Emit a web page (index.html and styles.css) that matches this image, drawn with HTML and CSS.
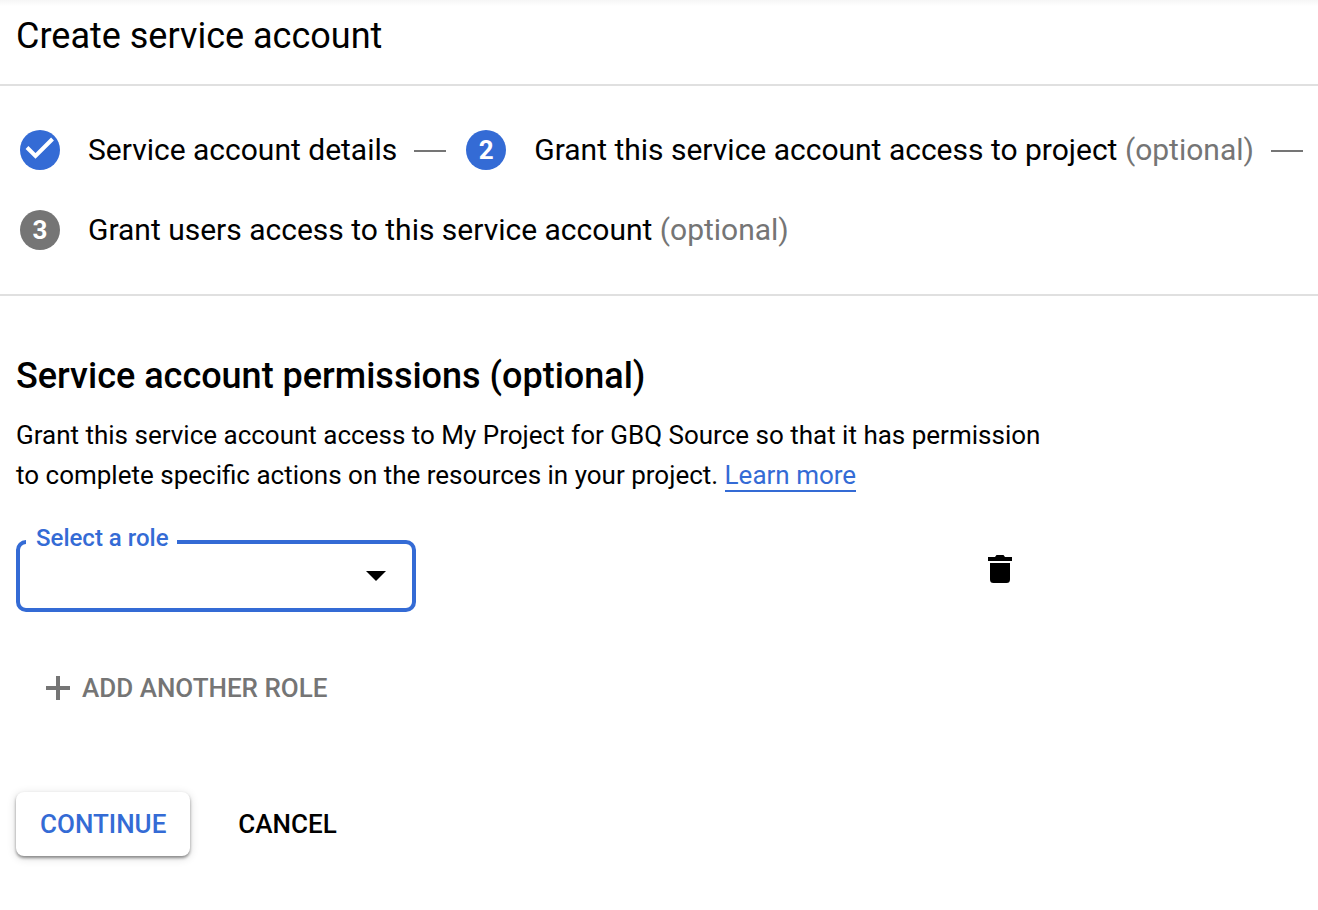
FILE: index.html
```html
<!DOCTYPE html>
<html lang="en">
<head>
<meta charset="utf-8">
<meta name="viewport" content="width=device-width, initial-scale=1">
<title>Create service account</title>
<link rel="stylesheet" href="styles.css">
</head>
<body>
<header class="page-header">
  <h1 class="page-title">Create service account</h1>
</header>
<main>
  <ol class="steps">
    <li class="step">
      <span class="badge">
        <svg class="badge-check" viewBox="0 0 40 40" aria-label="Completed"><path d="M7 17.500 15.500 26 32.500 9" fill="none" stroke="#fff" stroke-width="4"/></svg>
      </span>
      <span class="step-label">Service account details</span>
      <span class="step-line"></span>
    </li>
    <li class="step">
      <span class="badge">2</span>
      <span class="step-label">Grant this service account access to project <span class="optional">(optional)</span></span>
      <span class="step-line"></span>
    </li>
    <li class="step">
      <span class="badge badge-pending">3</span>
      <span class="step-label">Grant users access to this service account <span class="optional">(optional)</span></span>
    </li>
  </ol>
  <form class="permissions">
    <h2 class="section-title">Service account permissions (optional)</h2>
    <p class="description">Grant this service account access to My Project for GBQ Source so that it has permission to complete specific actions on the resources in your project. <a class="link" href="#">Learn more</a></p>
    <div class="role-row">
      <fieldset class="field">
        <legend class="field-legend"><label for="role">Select a role</label></legend>
        <div class="field-control">
          <select class="field-select" id="role"><option value=""></option></select>
          <svg class="field-arrow" viewBox="0 0 20 10" aria-hidden="true"><path d="M0 0h20L10 10z"/></svg>
        </div>
      </fieldset>
      <button class="delete-button" type="button" aria-label="Delete role">
        <svg class="delete-icon" viewBox="0 0 24 28" aria-hidden="true"><path d="M0 2h7l1.5-2h7L17 2h7v4H0zM2 8h20v16.500q0 3.500-3.500 3.500h-13Q2 28 2 24.500z"/></svg>
      </button>
    </div>
    <button class="button add-button" type="button">
      <svg class="add-icon" viewBox="0 0 24 24" aria-hidden="true"><path d="M10 0h4v10h10v4H14v10h-4V14H0v-4h10z"/></svg>
      ADD ANOTHER ROLE
    </button>
    <div class="actions">
      <button class="button continue-button" type="submit">CONTINUE</button>
      <button class="button cancel-button" type="button">CANCEL</button>
    </div>
  </form>
</main>
</body>
</html>
```
FILE: styles.css
```css
* {
  box-sizing: border-box;
}

body {
  margin: 0;
  background: #fff;
  color: #000;
  font-family: Roboto, "Liberation Sans", sans-serif;
  font-size: 26px;
}

svg {
  display: block;
}

.page-header {
  padding: 16px 16px 28px;
  border-bottom: 2px solid #e0e0e0;
  background: linear-gradient(#f6f6f6, #fff 6px);
}

.page-title,
.section-title {
  margin: 0;
  font-size: 36px;
  font-weight: 400;
  line-height: 40px;
}

.section-title {
  font-weight: 500;
}

.steps {
  display: flex;
  flex-wrap: wrap;
  gap: 40px 20px;
  margin: 0;
  padding: 44px 0 44px 20px;
  border-bottom: 2px solid #e0e0e0;
  list-style: none;
}

.step {
  display: flex;
  align-items: center;
}

.badge {
  display: flex;
  flex: none;
  align-items: center;
  justify-content: center;
  width: 40px;
  height: 40px;
  margin-right: 28px;
  border-radius: 50%;
  background: #346bd5;
  color: #fff;
  font-weight: 700;
  line-height: 40px;
}

.badge-pending {
  background: #757575;
}

.badge-check {
  width: 40px;
  height: 40px;
}

.step-label {
  font-size: 30px;
  line-height: 40px;
}

.optional {
  color: #757575;
}

.step-line {
  flex: none;
  width: 32px;
  height: 2px;
  margin: 2px 0 0 17px;
  background: #757575;
}

.permissions {
  padding: 60px 16px 54px;
}

.description {
  max-width: 1040px;
  margin: 19px 0 31px;
  line-height: 40px;
}

.link {
  border-bottom: 2px solid #346bd5;
  color: #346bd5;
  text-decoration: none;
}

.role-row {
  display: flex;
  align-items: center;
  justify-content: space-between;
  max-width: 1024px;
}

.field {
  width: 400px;
  min-width: 0;
  margin: 0;
  padding: 0;
  border: 4px solid #346bd5;
  border-radius: 10px;
}

.field-legend {
  margin-left: 6px;
  padding: 0 8px 8px 10px;
  color: #346bd5;
  font-size: 24px;
  font-weight: 500;
  line-height: 24px;
}

.field-control {
  display: grid;
  align-items: center;
  margin-top: -14px;
}

.field-select,
.field-arrow {
  grid-area: 1 / 1;
}

.field-select {
  width: 100%;
  height: 64px;
  padding: 0 56px 0 16px;
  border: 0;
  outline: 0;
  background: transparent;
  color: #000;
  font: inherit;
  appearance: none;
}

.field-arrow {
  justify-self: end;
  width: 20px;
  height: 10px;
  margin-right: 26px;
  pointer-events: none;
}

.delete-button {
  display: flex;
  align-items: center;
  justify-content: center;
  width: 80px;
  height: 80px;
  padding: 0;
  border: 0;
  background: transparent;
}

.delete-icon {
  width: 24px;
  height: 28px;
}

.button {
  height: 64px;
  padding: 0 24px;
  border: 0;
  border-radius: 8px;
  background: transparent;
  color: #000;
  font: inherit;
  font-weight: 500;
}

.add-button {
  display: flex;
  align-items: center;
  gap: 12px;
  margin: 44px 0 72px 6px;
  color: #757575;
}

.add-icon {
  width: 24px;
  height: 24px;
  fill: #757575;
}

.actions {
  display: flex;
  gap: 24px;
}

.continue-button {
  background: #fff;
  box-shadow: 0 2px 3px rgba(0, 0, 0, .4), 0 2px 10px rgba(0, 0, 0, .16);
  color: #346bd5;
}
```
